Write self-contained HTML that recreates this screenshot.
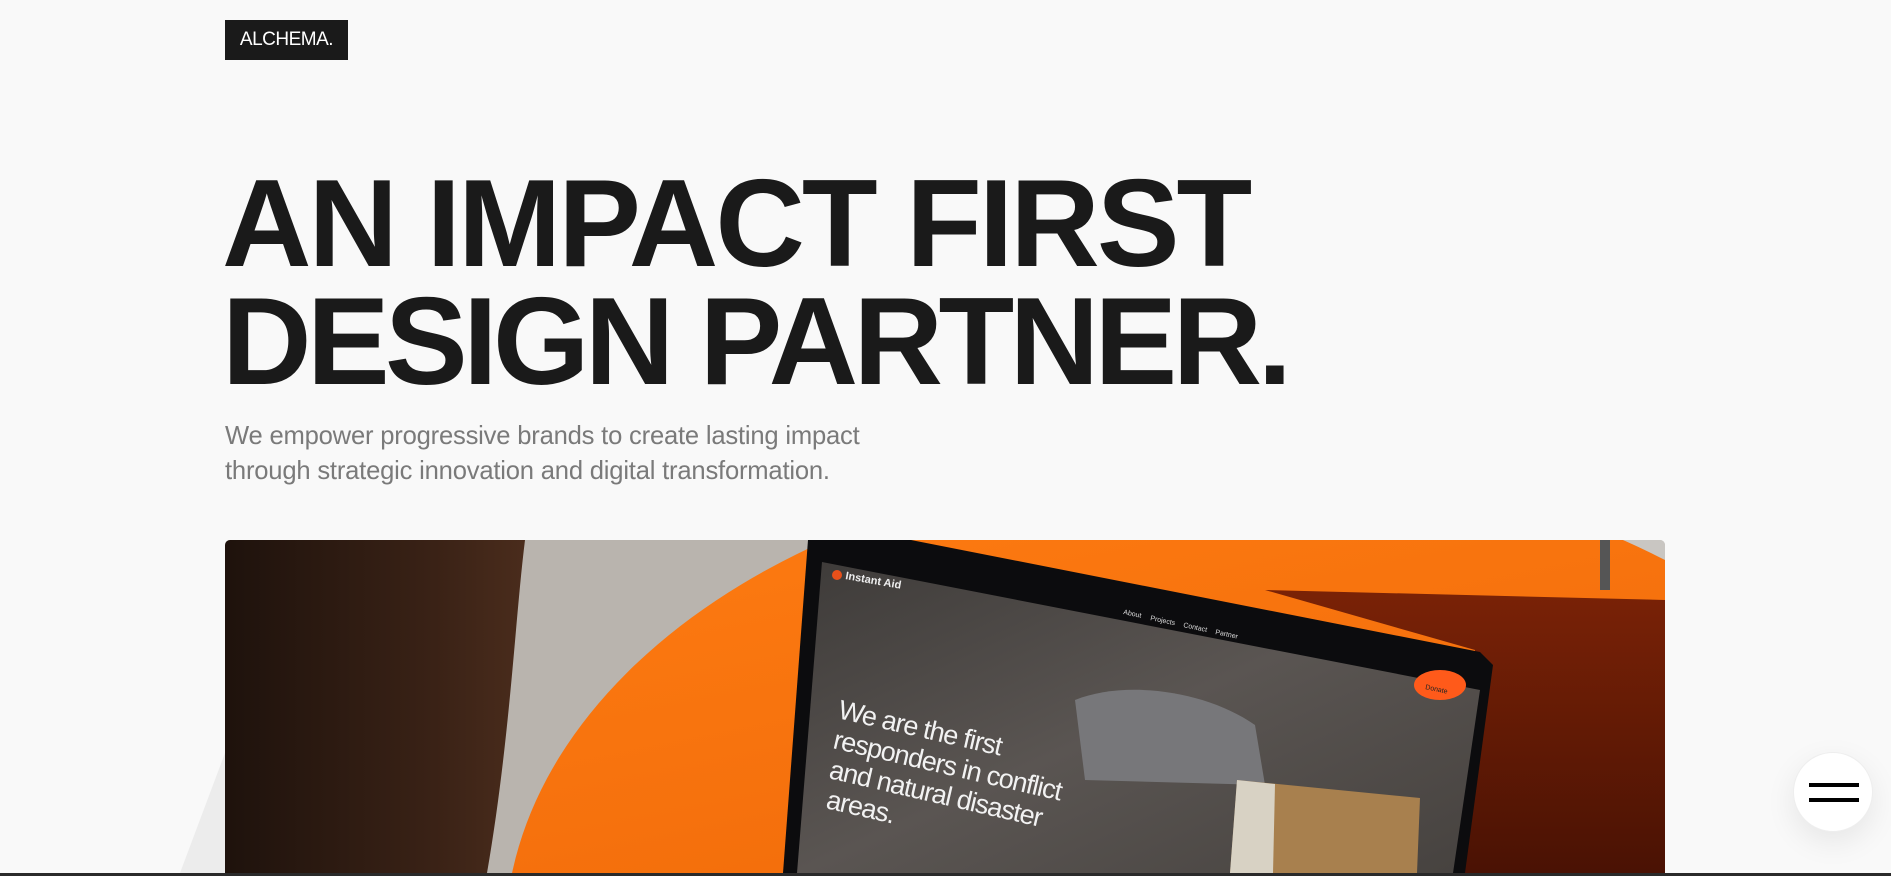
<!DOCTYPE html>
<html><head><meta charset="utf-8"><style>
html,body{margin:0;padding:0;}
body{width:1891px;height:876px;overflow:hidden;background:#f9f9f9;position:relative;font-family:"Liberation Sans",sans-serif;}
.logo{position:absolute;left:225px;top:20px;width:123px;height:40px;background:#1a1a1a;color:#fff;font-size:19px;line-height:40px;text-align:center;letter-spacing:-0.5px;}
h1{position:absolute;left:222px;top:165px;margin:0;font-size:124px;line-height:118px;font-weight:700;color:#1a1a1a;letter-spacing:-3px;white-space:nowrap;}
h1 span{letter-spacing:-4.6px;}
.sub{position:absolute;left:225px;top:419px;margin:0;font-size:25.6px;line-height:35px;color:#7a7a7a;letter-spacing:-0.2px;}
.img{position:absolute;left:225px;top:540px;width:1440px;height:333px;border-radius:5px 5px 0 0;overflow:hidden;}
.tri{position:absolute;left:0;top:0;}
.bar{position:absolute;left:0;top:873px;width:1891px;height:3px;background:#2a2a2a;}
.menu{position:absolute;left:1793px;top:752px;width:80px;height:80px;border-radius:50%;background:#fff;box-shadow:0 10px 30px rgba(0,0,0,0.08);border:1px solid #eee;box-sizing:border-box;}
.menu i{position:absolute;left:15px;width:50px;height:4px;background:#000;}
</style></head><body>
<svg class="tri" width="1891" height="876"><polygon points="225,753 225,873 180,873" fill="#ececec"/></svg>
<div class="logo">ALCHEMA.</div>
<h1>AN IMPACT FIRST<br><span>DESIGN PARTNER.</span></h1>
<p class="sub">We empower progressive brands to create lasting impact<br>through strategic innovation and digital transformation.</p>
<div class="img">
<svg width="1440" height="333" viewBox="0 0 1440 333">
<defs>
<linearGradient id="og" x1="0" y1="0" x2="0.3" y2="1"><stop offset="0" stop-color="#ff7d12"/><stop offset="0.6" stop-color="#f06a0a"/><stop offset="1" stop-color="#9a3406"/></linearGradient>
<linearGradient id="hd" x1="0" y1="0" x2="1" y2="0"><stop offset="0" stop-color="#1e120c"/><stop offset="0.7" stop-color="#3a2216"/><stop offset="1" stop-color="#4a2c1c"/></linearGradient>
<linearGradient id="sc" x1="0" y1="0" x2="1" y2="1"><stop offset="0" stop-color="#3e3b39"/><stop offset="0.5" stop-color="#5a5552"/><stop offset="1" stop-color="#46423f"/></linearGradient>
<linearGradient id="dr" x1="0" y1="0" x2="0" y2="1"><stop offset="0" stop-color="#7a2206"/><stop offset="1" stop-color="#4a1204"/></linearGradient>
</defs>
<rect width="1440" height="333" fill="#b9b4ae"/>
<rect x="1370" y="0" width="70" height="60" fill="#c9c6c2"/>
<ellipse cx="1000" cy="400" rx="720" ry="480" fill="url(#og)"/>
<polygon points="1040,50 1440,60 1440,333 1230,333 1250,110" fill="url(#dr)"/>
<rect x="1375" y="0" width="10" height="50" fill="#555"/>
<path d="M0,0 H300 C290,80 285,200 262,333 H0 Z" fill="url(#hd)"/>
<polygon points="583,0 686,0 1255,112 1268,125 1240,333 558,333" fill="#0c0c0e"/>
<polygon points="597,22 1255,150 1228,333 572,333" fill="url(#sc)"/>
<path d="M850,160 C900,140 980,150 1030,185 L1040,245 L860,240 Z" fill="#77777a"/>
<polygon points="1012,240 1195,258 1192,333 1005,333" fill="#a8804e"/>
<polygon points="1012,240 1050,244 1048,333 1005,333" fill="#d8d2c4"/>
<ellipse cx="1215" cy="145" rx="26" ry="15" fill="#ff5a1a"/>
<text x="1200" y="149" font-size="7" fill="#222" transform="rotate(12 1200 149)">Donate</text>
<circle cx="612" cy="35" r="5" fill="#e8501a"/>
<text x="620" y="39" font-size="11" font-weight="700" fill="#eee" transform="rotate(10 620 39)">Instant Aid</text>
<g font-size="7" fill="#ddd">
<text x="898" y="74" transform="rotate(12 898 74)">About</text>
<text x="925" y="80" transform="rotate(12 925 80)">Projects</text>
<text x="958" y="87" transform="rotate(12 958 87)">Contact</text>
<text x="990" y="94" transform="rotate(12 990 94)">Partner</text>
</g>
<g font-size="27" fill="#f2f2f2">
<text x="612" y="178" transform="rotate(13 612 178)" letter-spacing="-1">We are the first</text>
<text x="607" y="208" transform="rotate(13 607 208)" letter-spacing="-1">responders in conflict</text>
<text x="603" y="238" transform="rotate(13 603 238)" letter-spacing="-1">and natural disaster</text>
<text x="600" y="268" transform="rotate(13 600 268)" letter-spacing="-1">areas.</text>
</g>
</svg>
</div>
<div class="bar"></div>
<div class="menu"><i style="top:30px"></i><i style="top:45px"></i></div>
</body></html>
